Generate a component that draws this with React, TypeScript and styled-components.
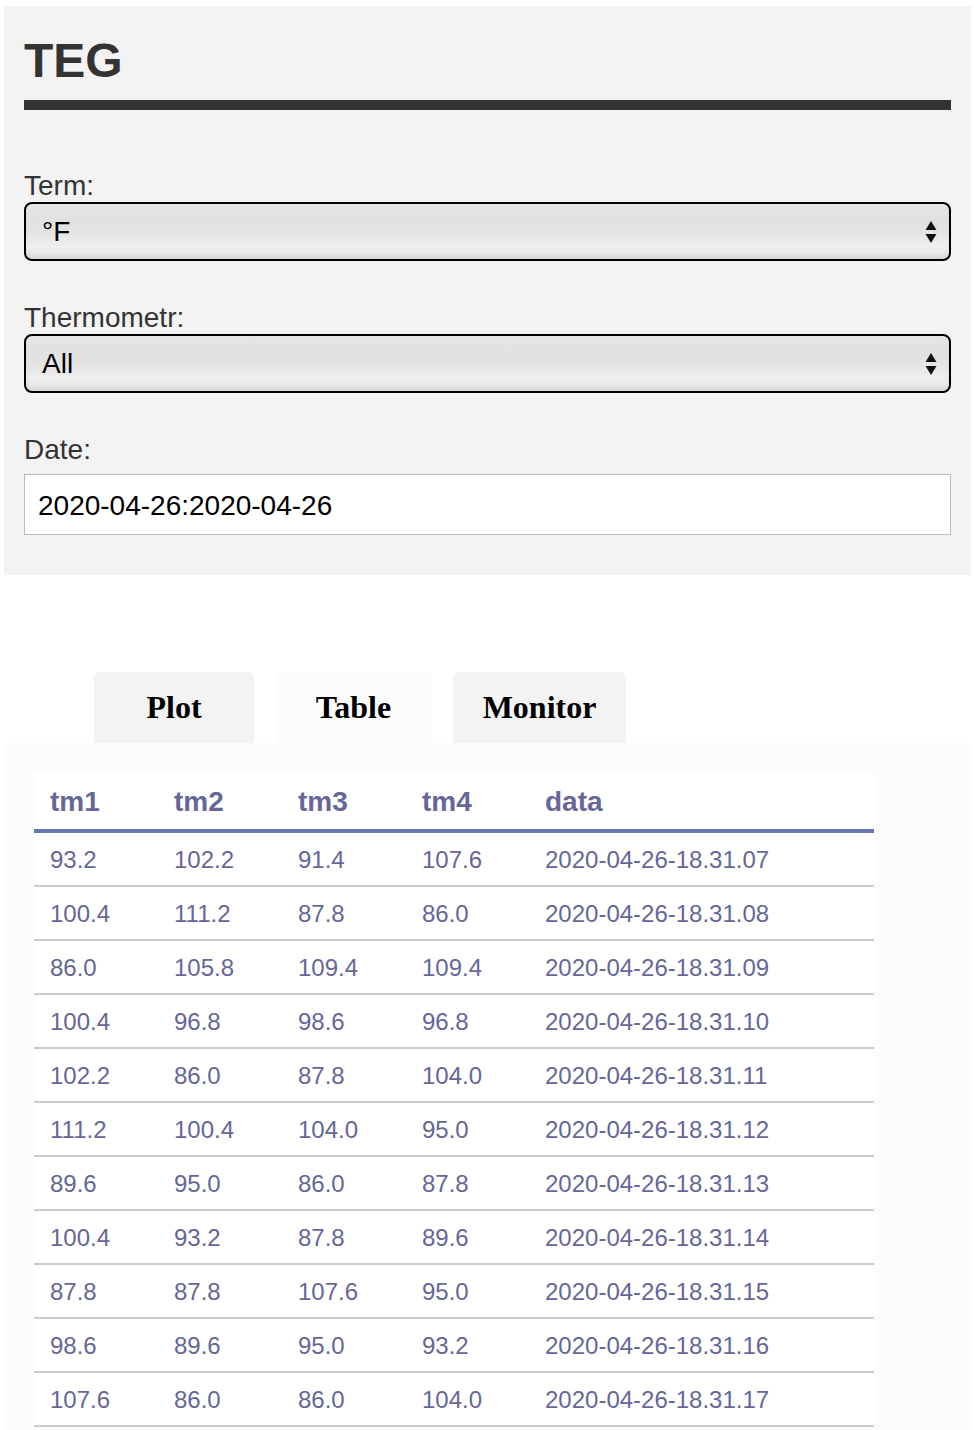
import React from "react";
import styled, { createGlobalStyle } from "styled-components";

const GlobalStyle = createGlobalStyle`
  body {
    margin: 0;
    background: #ffffff;
    font-family: "Liberation Sans", Arial, sans-serif;
  }
`;

const Page = styled.div`
  padding: 6px 3px 0 4px;
`;

const Settings = styled.section`
  background-color: #f3f3f3;
  padding: 31px 20px 40px;
  display: flex;
  flex-direction: column;
`;

const Title = styled.h1`
  margin: 0 0 15px;
  font-size: 48px;
  line-height: 1;
  font-weight: bold;
  color: #333333;
`;

const Rule = styled.div`
  height: 10px;
  background-color: #333333;
`;

const Label = styled.label<{ $gap: number; $below?: number }>`
  display: block;
  margin-top: ${(props) => props.$gap}px;
  margin-bottom: ${(props) => props.$below || 0}px;
  font-size: 28px;
  line-height: 32px;
  color: #333333;
`;

const SelectBox = styled.div`
  position: relative;
  height: 59px;
`;

const Select = styled.select`
  appearance: none;
  -webkit-appearance: none;
  width: 100%;
  height: 100%;
  box-sizing: border-box;
  border: 2px solid #000000;
  border-radius: 8px;
  padding: 0 40px 0 16px;
  font-family: "Liberation Sans", Arial, sans-serif;
  font-size: 28px;
  color: #000000;
  background: linear-gradient(
    #e6e6e6 0%,
    #e1e1e1 30%,
    #e4e4e4 50%,
    #eeeeee 78%,
    #e3e3e3 100%
  );
  box-shadow: inset 0 -3px 4px rgba(0, 0, 0, 0.06);
  outline: none;
`;

const Arrows = styled.svg`
  position: absolute;
  right: 14px;
  top: 50%;
  transform: translateY(-50%);
  pointer-events: none;
`;

const DateInput = styled.input`
  box-sizing: border-box;
  width: 100%;
  height: 61px;
  border: 1px solid #bbbbbb;
  border-radius: 0;
  background: #ffffff;
  padding: 3px 13px 0;
  font-family: "Liberation Sans", Arial, sans-serif;
  font-size: 28px;
  color: #000000;
  outline: none;
`;

const TabBar = styled.nav`
  display: flex;
  gap: 21px;
  margin-top: 97px;
  padding-left: 90px;
`;

const Tab = styled.button<{ $width: number; $active?: boolean }>`
  width: ${(props) => props.$width}px;
  height: 71px;
  border: none;
  border-radius: 6px 6px 0 0;
  background-color: ${(props) => (props.$active ? "#fcfcfc" : "#f3f3f3")};
  font-family: "Liberation Serif", "Times New Roman", serif;
  font-size: 32px;
  font-weight: bold;
  color: #000000;
  display: flex;
  align-items: center;
  justify-content: center;
  padding: 0;
  cursor: pointer;
`;

const TabPanel = styled.section`
  background-color: #fcfcfc;
  padding: 30px 30px 40px;
`;

const Table = styled.table`
  width: 840px;
  border-collapse: collapse;
  background-color: #ffffff;
  font-size: 24px;
  text-align: left;
`;

const HeadCell = styled.th<{ $width?: number }>`
  width: ${(props) => (props.$width ? `${props.$width - 32}px` : "auto")};
  padding: 15px 16px 13px;
  line-height: 28px;
  font-size: 28px;
  font-weight: bold;
  color: #666699;
  border-bottom: 4px solid #6678b1;
`;

const Cell = styled.td`
  padding: 13px 16px 11px;
  line-height: 28px;
  color: #666699;
  border-bottom: 2px solid #cccccc;
`;

const rows = [
  ["93.2", "102.2", "91.4", "107.6", "2020-04-26-18.31.07"],
  ["100.4", "111.2", "87.8", "86.0", "2020-04-26-18.31.08"],
  ["86.0", "105.8", "109.4", "109.4", "2020-04-26-18.31.09"],
  ["100.4", "96.8", "98.6", "96.8", "2020-04-26-18.31.10"],
  ["102.2", "86.0", "87.8", "104.0", "2020-04-26-18.31.11"],
  ["111.2", "100.4", "104.0", "95.0", "2020-04-26-18.31.12"],
  ["89.6", "95.0", "86.0", "87.8", "2020-04-26-18.31.13"],
  ["100.4", "93.2", "87.8", "89.6", "2020-04-26-18.31.14"],
  ["87.8", "87.8", "107.6", "95.0", "2020-04-26-18.31.15"],
  ["98.6", "89.6", "95.0", "93.2", "2020-04-26-18.31.16"],
  ["107.6", "86.0", "86.0", "104.0", "2020-04-26-18.31.17"],
];

const SelectArrows = () => (
  <Arrows width="12" height="24" viewBox="0 0 12 24">
    <path d="M6 1 L11.5 10 H0.5 Z" fill="#111" />
    <path d="M6 23 L11.5 14 H0.5 Z" fill="#111" />
  </Arrows>
);

const App = () => {
  return (
    <Page>
      <GlobalStyle />
      <Settings>
        <Title>TEG</Title>
        <Rule />
        <Label $gap={60}>Term:</Label>
        <SelectBox>
          <Select defaultValue="F">
            <option value="F">°F</option>
            <option value="C">°C</option>
          </Select>
          <SelectArrows />
        </SelectBox>
        <Label $gap={41}>Thermometr:</Label>
        <SelectBox>
          <Select defaultValue="all">
            <option value="all">All</option>
            <option value="tm1">tm1</option>
            <option value="tm2">tm2</option>
            <option value="tm3">tm3</option>
            <option value="tm4">tm4</option>
          </Select>
          <SelectArrows />
        </SelectBox>
        <Label $gap={41} $below={8}>
          Date:
        </Label>
        <DateInput type="text" defaultValue="2020-04-26:2020-04-26" />
      </Settings>
      <TabBar>
        <Tab $width={160}>Plot</Tab>
        <Tab $width={157} $active>
          Table
        </Tab>
        <Tab $width={173}>Monitor</Tab>
      </TabBar>
      <TabPanel>
        <Table>
          <thead>
            <tr>
              <HeadCell $width={124}>tm1</HeadCell>
              <HeadCell $width={124}>tm2</HeadCell>
              <HeadCell $width={124}>tm3</HeadCell>
              <HeadCell $width={123}>tm4</HeadCell>
              <HeadCell>data</HeadCell>
            </tr>
          </thead>
          <tbody>
            {rows.map((row, i) => (
              <tr key={i}>
                {row.map((value, j) => (
                  <Cell key={j}>{value}</Cell>
                ))}
              </tr>
            ))}
          </tbody>
        </Table>
      </TabPanel>
    </Page>
  );
};

export default App;
